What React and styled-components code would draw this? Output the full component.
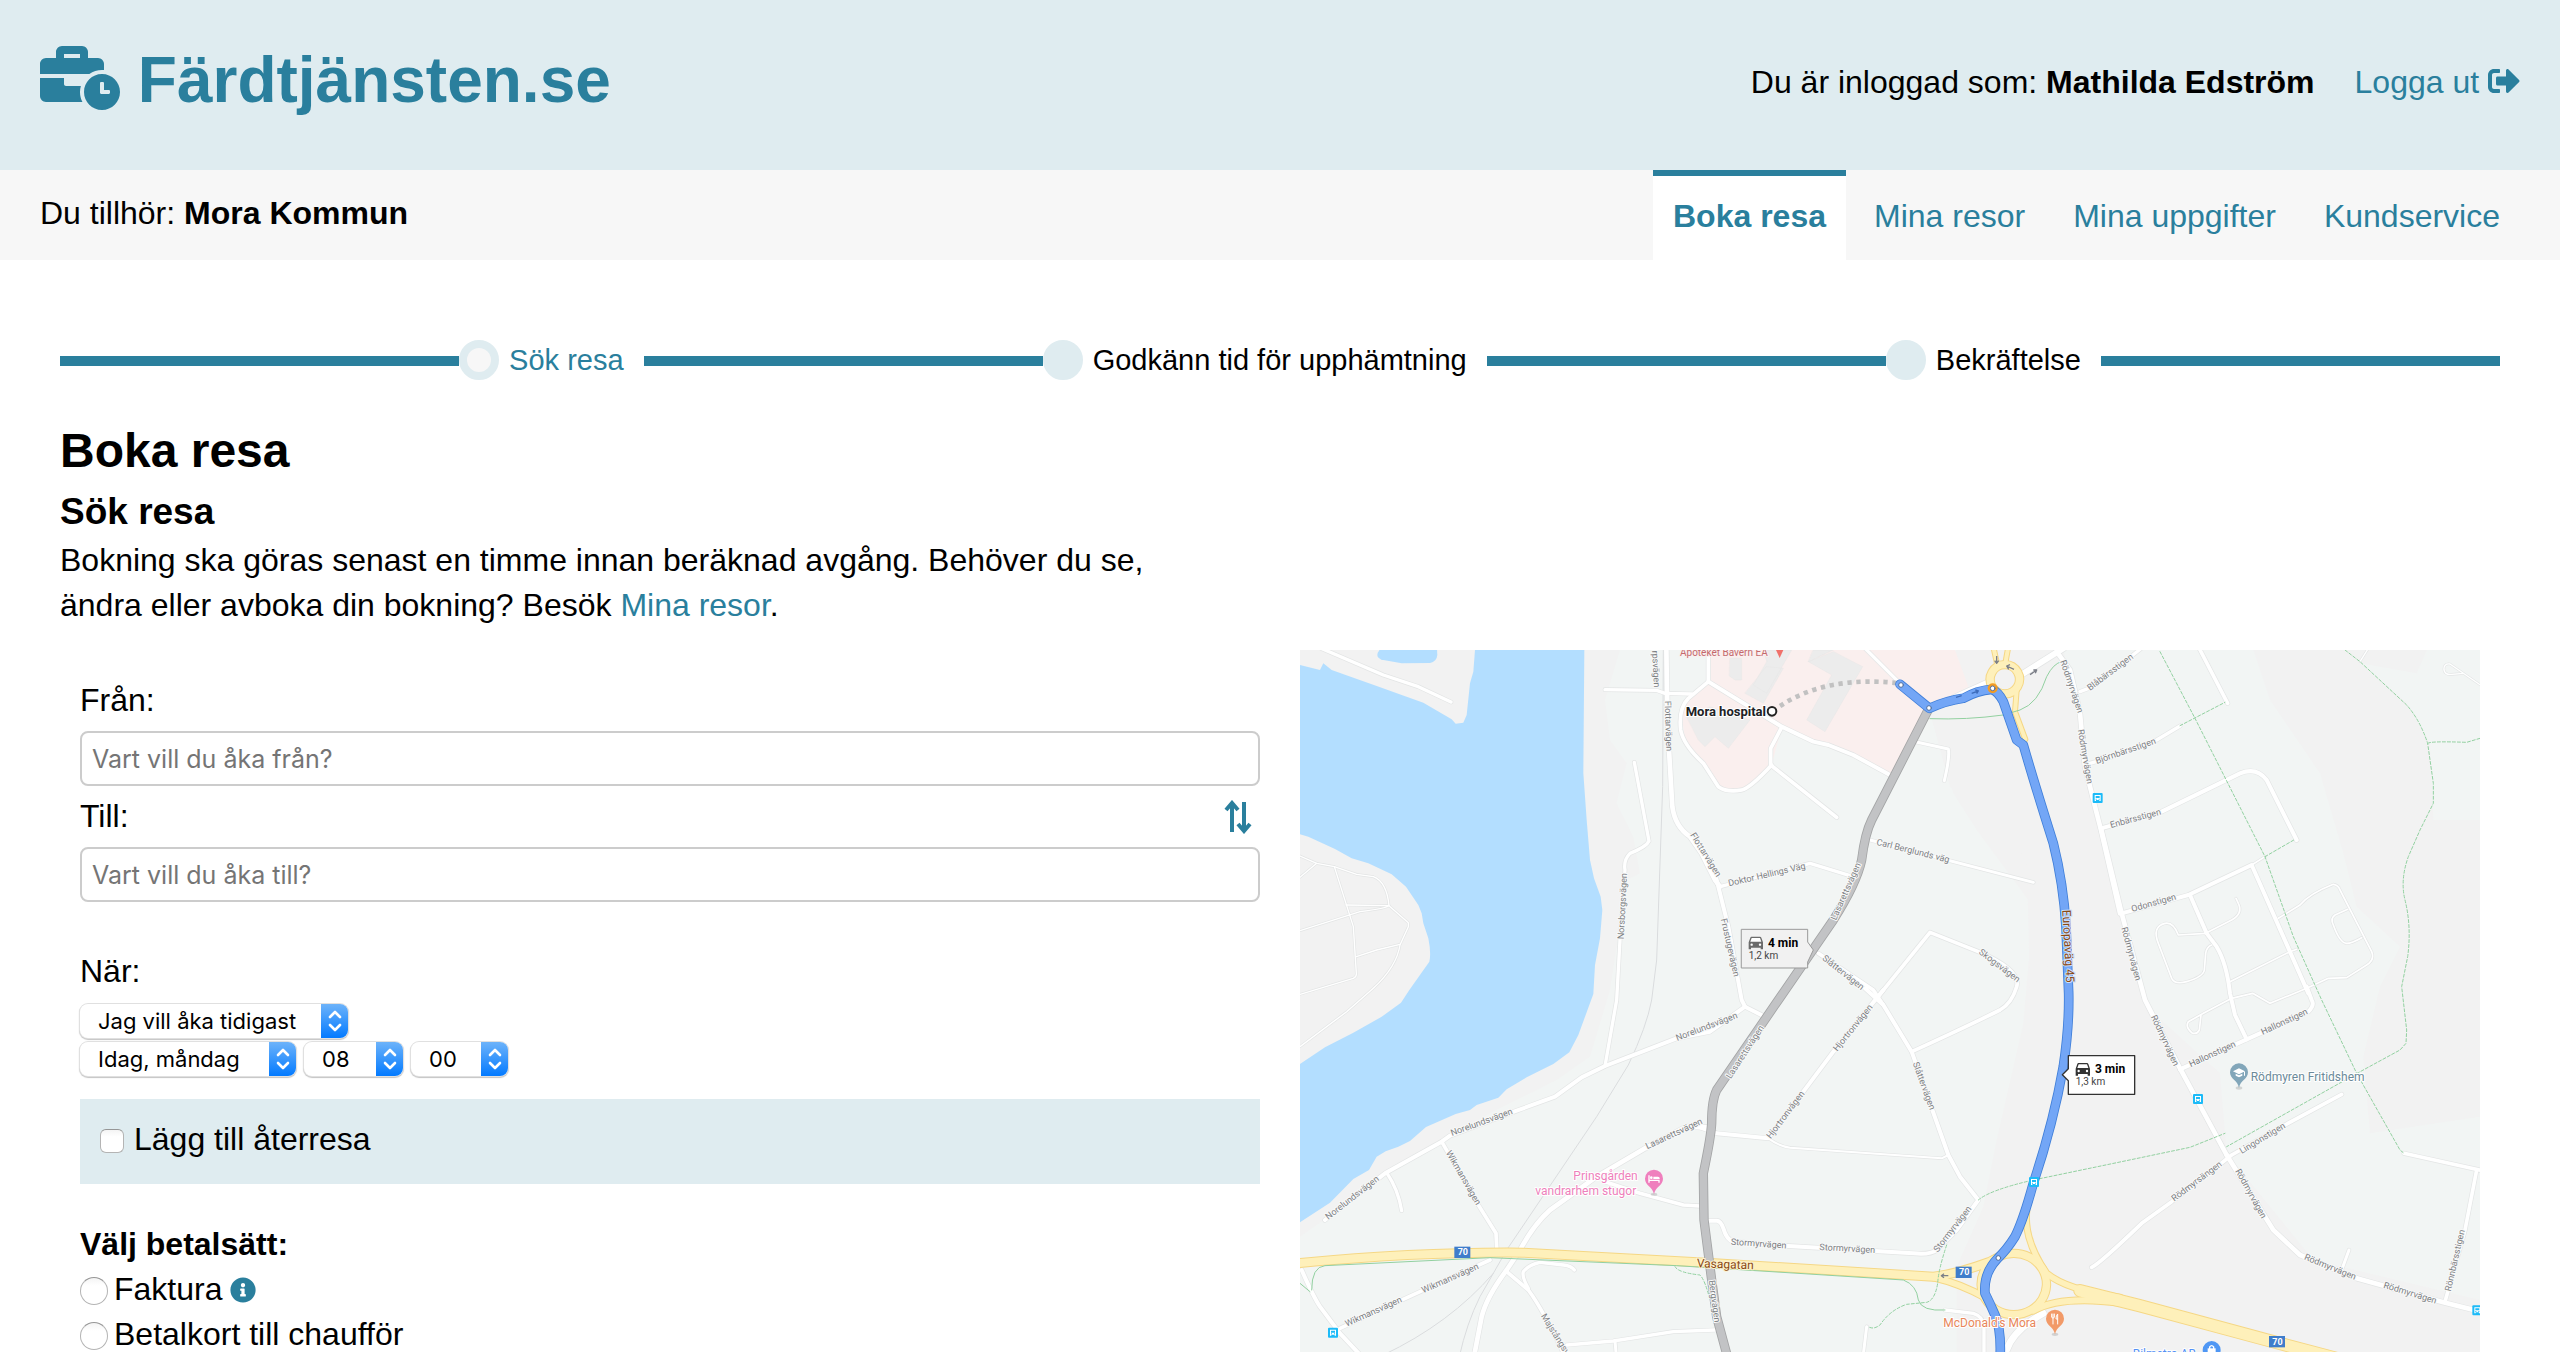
import React from "react";
import styled, { createGlobalStyle } from "styled-components";
import { FaBusinessTime, FaSignOutAlt, FaInfoCircle } from "react-icons/fa";

const teal = "#2a7f9d";
const pale = "#dfecf0";
const light = "#f7f7f7";

const Global = createGlobalStyle`
  *, *::before, *::after { box-sizing: border-box; }
  html { scrollbar-width: none; }
  body {
    margin: 0;
    background: #fff;
    color: #000;
    font-family: "Liberation Sans", Arial, Helvetica, sans-serif;
    font-size: 32px;
    line-height: 45px;
  }
`;

const Header = styled.header`
  display: flex;
  justify-content: space-between;
  align-items: flex-start;
  padding: 38px 40px 48px;
  background: ${pale};
`;
const Logo = styled.a`
  color: ${teal};
  font-size: 64px;
  font-weight: bold;
  line-height: 84px;
  text-decoration: none;
  svg { width: 80px; height: 64px; vertical-align: -8px; }
`;
const User = styled.div`
  display: flex;
  gap: 40px;
  padding-top: 22px;
`;
const Link = styled.a`
  color: ${teal};
  text-decoration: none;
  svg { vertical-align: -4px; }
`;
const SubHeader = styled.div`
  display: flex;
  justify-content: space-between;
  align-items: flex-start;
  padding: 0 40px;
  background: ${light};
`;
const Belongs = styled.div`
  padding-top: 21px;
`;
const Nav = styled.nav`
  display: flex;
  gap: 8px;
`;
const Tab = styled.a`
  padding: 18px 20px 21px;
  border-top: 6px solid ${(p) => (p.$active ? teal : "transparent")};
  background: ${(p) => (p.$active ? "#fff" : "transparent")};
  color: ${teal};
  font-weight: ${(p) => (p.$active ? "bold" : "normal")};
  text-decoration: none;
`;

const Main = styled.main`
  padding: 80px 60px 0;
`;
const Steps = styled.ol`
  display: flex;
  align-items: center;
  margin: 0 0 37px;
  padding: 0;
  list-style: none;
  font-size: 29px;
  line-height: 40px;
  &::after { content: ""; flex: 1; height: 10px; margin-top: 2px; background: ${teal}; }
`;
const Step = styled.li`
  display: flex;
  flex: 1 0 auto;
  align-items: center;
  padding-right: 20px;
  color: ${(p) => (p.$current ? teal : "inherit")};
  &::before { content: ""; flex: 1; height: 10px; margin-top: 2px; background: ${teal}; }
`;
const Dot = styled.span`
  width: 40px;
  height: 40px;
  margin-right: 10px;
  border: 8px solid ${pale};
  border-radius: 50%;
  background: ${(p) => (p.$current ? light : pale)};
`;
const Title = styled.h1`
  margin: 0;
  font-size: 48px;
  line-height: 68px;
`;
const Subtitle = styled.h2`
  margin: 0;
  font-size: 37px;
  line-height: 53px;
`;
const Intro = styled.p`
  max-width: 1120px;
  margin: 0 0 22px;
`;
const Columns = styled.div`
  display: grid;
  grid-template-columns: 1fr 1fr;
`;
const Form = styled.form`
  padding: 20px 20px 28px;
`;
const FieldHead = styled.div`
  display: flex;
  justify-content: space-between;
  align-items: center;
  margin: 8px 0;
  padding-right: 8px;
`;
const TextBox = styled.input`
  display: block;
  width: 100%;
  height: 55px;
  padding: 0 10px;
  border: 2px solid #ccc;
  border-radius: 8px;
  background: #fff;
  font: 25px Inter, sans-serif;
  &::placeholder { color: #757575; opacity: 1; }
`;
const SwapButton = styled.button`
  display: flex;
  padding: 0;
  border: 0;
  background: none;
  color: ${teal};
`;
const WhenSet = styled.fieldset`
  margin: 47px 0 19px;
  padding: 0;
  border: 0;
`;
const WhenLegend = styled.legend`
  padding: 0 0 10px;
`;
const SelectRow = styled.div`
  display: flex;
  gap: 8px;
  margin-bottom: 4px;
`;
const SelectWrap = styled.span`
  display: grid;
  grid-template-columns: 1fr 27px;
  width: ${(p) => p.$width}px;
  height: 34px;
  border-radius: 8px;
  overflow: hidden;
  background: #fff;
  box-shadow: 0 0 0 1px #e0e0e0, 0 1px 1px 1px #c4c4c4;
`;
const Select = styled.select`
  grid-area: 1 / 1 / 2 / 3;
  appearance: none;
  padding: 0 18px;
  border: 0;
  background: transparent;
  color: #000;
  font: 22px Inter, sans-serif;
`;
const Stepper = styled.span`
  grid-area: 1 / 2 / 2 / 3;
  display: grid;
  place-items: center;
  background: linear-gradient(#6db3fa, #037aff);
  pointer-events: none;
`;
const ReturnBox = styled.div`
  display: flex;
  padding: 18px 20px 22px;
  background: ${pale};
`;
const Option = styled.label`
  display: flex;
  align-items: center;
  gap: ${(p) => p.$gap}px;
`;
const Check = styled.input`
  appearance: none;
  width: 24px;
  height: 24px;
  margin: 2px 0 0;
  border: 1px solid #b4b4b4;
  border-top-color: #969696;
  border-radius: 6px;
  background: linear-gradient(#f4f4f4, #fff 30%);
`;
const Radio = styled(Check)`
  width: 28px;
  height: 28px;
  border-radius: 50%;
`;
const PaySet = styled.fieldset`
  margin: 38px 0 0;
  padding: 0;
  border: 0;
`;
const PayLegend = styled.legend`
  padding: 0;
  font-weight: bold;
`;
const PayRow = styled.div`
  display: flex;
  align-items: center;
  gap: 8px;
  color: ${teal};
  ${Option} { color: #000; }
`;
const MapPane = styled.div`
  padding: 0 20px;
`;
const MapSvg = styled.svg`
  display: block;
  width: 100%;
  height: auto;
  background: #f2f2f2;
  font-family: Roboto, sans-serif;
`;
const MapText = styled.text`
  font-size: ${(p) => p.$size}px;
  font-weight: ${(p) => p.$weight};
  fill: ${(p) => p.$color};
  paint-order: stroke;
  stroke: ${(p) => p.$halo};
  stroke-width: 2px;
  stroke-linejoin: round;
`;

/* The map is drawn in six tiles, at three drawing units to the pixel. */
const tiles = { A: [-30, -30], B: [1200, -30], C: [2340, -30], D: [-30, 1020], E: [1200, 1020], F: [2340, 1020] };
const shift = (t) => `translate(${tiles[t][0]} ${tiles[t][1]})`;

const roads = [
  ["A", 10, "M70,15 L280,105 385,140 483,186"],
  ["A", 10, "M945,149 L1100,151 1125,160 1205,162"],
  ["A", 14, "M1129,20 L1131,160 1137,330 1147,500 Q1155,560 1200,590 L1235,640 1275,720 1290,740"],
  ["A", 10, "M1033,367 L1077,603 Q1070,620 1020,640 Q1000,660 1005,690 L990,900 980,1080 945,1278"],
  ["B", 11, "M25,20 L25,125 -35,175 Q-65,205 -58,270 Q-50,315 10,370 L55,440 Q80,458 125,450 Q150,445 215,375"],
  ["B", 12, "M25,125 L245,260 340,305 385,315 460,345 570,405"],
  ["B", 11, "M245,262 L212,325 212,375 410,532"],
  ["B", 10, "M490,20 L600,130"],
  ["B", 9, "M645,305 L745,327 Q750,350 733,422"],
  ["B", 9, "M510,600 L1000,727"],
  ["B", 10, "M60,740 L330,670 460,710"],
  ["B", 12, "M45,700 L85,860 125,1080 135,1100 190,1128"],
  ["B", 13, "M760,172 L870,122"],
  ["B", 18, "M955,110 L1090,25"],
  ["B", 14, "M1070,35 L1110,90 1140,220 1155,380 1185,500 1203,570 1260,820"],
  ["B", 11, "M355,940 L520,1050 550,1095"],
  ["B", 11, "M530,1075 L690,877 835,935 Q965,990 950,1040 Q935,1090 900,1110 Q800,1160 635,1235"],
  ["E", 12, "M495,-5 L550,45 635,185 745,495 780,560 835,630 770,720 710,780 Q690,795 640,790 L265,768 100,755 Q80,750 70,715 Q62,692 50,692 L25,692"],
  ["E", 12, "M550,0 L400,185 310,305 205,445 50,430 0,412"],
  ["E", 6, "M205,445 Q240,470 270,473 L725,505 745,495"],
  ["D", 12, "M1365,50 L1260,125 1160,145 945,228 875,262 795,320 680,362 480,437 455,455 285,550 105,690"],
  ["D", 10, "M290,548 Q325,600 335,662"],
  ["D", 11, "M455,455 L565,645 618,730 621,790"],
  ["D", 14, "M1250,412 L1190,410 1065,475 920,560 780,660 Q730,705 690,780 L650,840 Q590,920 575,980 L550,1110"],
  ["D", 11, "M945,575 L1050,610 1180,645 1230,648"],
  ["D", 11, "M600,810 L390,905 150,1015"],
  ["D", 12, "M35,840 Q70,920 90,950 L150,1030 225,1110"],
  ["D", 11, "M650,845 L715,900 Q760,960 830,1110"],
  ["D", 10, "M715,895 Q695,860 700,845 Q715,825 750,817 L820,825 Q845,828 853,840"],
  ["D", 10, "M830,1065 L970,1053 1150,1025 1275,1020"],
  ["D", 9, "M975,1053 L980,1110"],
  ["E", 9, "M500,1010 L488,1110"],
  ["E", 10, "M735,960 L820,970 Q850,980 852,1010 L852,1110"],
  ["E", 20, "M920,1080 Q940,1020 1030,970"],
  ["F", 11, "M35,832 Q60,820 185,700 L275,635 430,515 455,495 615,405 785,313"],
  ["C", 14, "M63,565 L125,820 195,1080 300,1285 440,1545"],
  ["F", 14, "M440,495 L580,720 660,795 830,865 1090,937 1230,972"],
  ["F", 12, "M300,238 L500,148 685,65 Q705,45 695,30 L680,-10"],
  ["C", 12, "M330,765 L380,880 410,920 Q440,970 450,1060 L465,1125 500,1198"],
  ["C", 12, "M125,820 L325,765 515,675 685,1060"],
  ["C", 10, "M30,370 L100,350 230,300 300,258"],
  ["C", 12, "M63,565 L245,515 480,400 Q530,380 560,420 L650,600"],
  ["C", 11, "M355,20 L443,190"],
  ["C", 10, "M0,155 L40,140 190,20"],
  ["C", 5, "M515,675 L555,650"],
  ["F", 11, "M972,490 L1230,547"],
  ["F", 11, "M1190,540 L1155,720 1095,935"],
  ["F", 9, "M785,840 L807,780"],
  ["C", 5, "M380,880 L295,885 Q280,845 255,850 Q215,860 235,910 L275,1015 Q285,1035 320,1025 Q370,1010 373,990 L377,940 Q380,920 395,915"],
  ["C", 5, "M380,878 L455,840 Q490,820 475,790 L468,775"],
  ["C", 5, "M595,835 L660,795 Q690,760 760,733 Q775,735 780,750 L875,935 Q885,960 860,975 L800,1013 745,1015 680,1045 570,1090 518,1060 455,1075 370,1120 325,1145 Q315,1160 335,1178 Q350,1185 358,1170 L363,1125"],
  ["C", 5, "M803,808 L765,825 Q750,835 760,855 Q780,910 800,910 Q815,910 845,893"],
  ["C", 5, "M450,1025 L630,935 650,928"],
  ["C", 4, "M865,25 L840,65"],
  ["C", 4, "M1230,155 L1110,72 Q1090,70 1092,90 Q1095,105 1115,103 L1150,100"],
  ["A", 4, "M30,648 L80,670 133,680 200,703 250,710 Q290,725 297,797 L355,848 355,860 330,915 Q320,980 250,1045 L170,1115 30,1220"],
  ["A", 4, "M80,670 L30,712"],
  ["A", 4, "M133,680 L190,860 199,1000 Q200,1010 190,1015 L30,1063"],
  ["A", 4, "M168,795 L297,797 Q290,805 210,815 L30,872"],
  ["A", 4, "M199,950 L260,930 330,913"],
];

const highways = [
  ["D", 26, "M0,822 Q380,785 700,788 L1250,818 1930,860 Q2000,852 2100,815 L2120,805"],
  ["E", 20, "M700,862 Q780,880 860,925"],
  ["E", 24, "M942,790 A98,92 0 1 1 941,790 Z"],
  ["E", 18, "M980,660 Q970,750 1040,850 Q1100,900 1260,922"],
  ["E", 20, "M1000,962 Q1080,915 1260,938"],
  ["F", 36, "M0,902 L180,947 580,1055 780,1108"],
  ["F", 16, "M80,925 Q140,935 220,962"],
  ["B", 24, "M915,74 A44,44 0 1 1 914,74 Z"],
  ["B", 14, "M880,20 L893,80"],
  ["B", 14, "M925,20 L915,75"],
  ["B", 14, "M950,150 L945,215 976,298"],
];

const rails = [
  ["A", "M1120,30 L1118,440 1100,960 1085,1080 Q1070,1160 1015,1275 L920,1430 650,1830 570,1970 Q530,2050 508,2150"],
  ["D", "M610,850 Q480,1000 280,1095"],
];

const trails = [
  ["B", 0, "M690,236 Q800,240 910,225 L960,210 Q1015,190 1040,110 Q1060,70 1085,65"],
  ["D", 0, "M65,900 Q65,830 105,827 L600,803 1160,827 1840,870 Q1880,885 1885,930 Q1895,965 1965,960"],
  ["D", 0, "M30,880 L60,905"],
  ["D", 1, "M1155,830 Q1165,848 1230,855 Q1245,870 1260,930"],
  ["C", 1, "M240,35 L345,235 555,650 640,890 725,1080 830,1300 960,1530 972,1540"],
  ["C", 1, "M300,257 L435,187"],
  ["C", 1, "M555,650 L645,598"],
  ["C", 1, "M795,30 L840,65 980,195 Q1020,240 1043,310 L1060,430 1060,490 1020,570 985,650 Q960,720 975,780 Q995,860 983,950 L965,1040 980,1170 978,1210 960,1230 835,1298 440,1520"],
  ["C", 1, "M1043,310 Q1050,303 1160,307 L1200,295"],
  ["E", 1, "M835,630 Q870,600 1000,570 L1260,516 1470,472 1575,430"],
  ["E", 1, "M740,765 Q715,840 713,880 Q705,930 680,937 L620,943 Q570,960 540,1005 Q520,1020 505,1010"],
];

const routeAlt = "M687,205 L515,540 Q495,580 485,660 Q470,730 400,840 L235,1080 50,1350 Q35,1380 35,1450 Q33,1490 10,1600 L12,1740 35,1920 50,2030 85,2160";
const routeMain = "M600,133 L688,205 Q740,182 790,175 Q830,152 875,148 Q895,155 910,185 L950,300 970,315 Q1000,420 1060,610 Q1090,730 1098,860 L1106,1060 Q1108,1160 1090,1280 Q1060,1450 1000,1630 Q970,1740 945,1790 Q920,1830 893,1855 Q850,1900 855,1960 Q870,1990 885,2025 Q905,2070 900,2160";

/* tile, x, y, angle, text */
const streets = [
  ["A", 1086, 32, 87, "rpsvägen"],
  ["A", 1124, 183, 88, "Flottarvägen"],
  ["A", 1200, 585, 58, "Flottarvägen"],
  ["A", 1001, 898, -87, "Norsborgsvägen"],
  ["B", 87, 739, -13, "Doktor Hellings Väg"],
  ["B", 528, 614, 14, "Carl Berglunds väg"],
  ["B", 62, 838, 77, "Frustugevägen"],
  ["B", 365, 958, 38, "Slåttervägen"],
  ["B", 835, 940, 37, "Skogsvägen"],
  ["B", 408, 842, -66, "Lasarettsvägen"],
  ["B", 1080, 64, 71, "Rödmyrvägen"],
  ["B", 1133, 270, 80, "Rödmyrvägen"],
  ["C", 30, 153, -37, "Blåbärsstigen"],
  ["C", 50, 372, -19, "Björnbärsstigen"],
  ["C", 93, 564, -15, "Enbärsstigen"],
  ["C", 157, 816, -16, "Odonstigen"],
  ["C", 124, 864, 75, "Rödmyrvägen"],
  ["F", 212, 80, 65, "Rödmyrvägen"],
  ["F", 332, 232, -25, "Hallonstigen"],
  ["F", 548, 135, -25, "Hallonstigen"],
  ["F", 485, 492, -31, "Lingonstigen"],
  ["F", 283, 635, -37, "Rödmyrsängen"],
  ["F", 465, 543, 61, "Rödmyrvägen"],
  ["F", 671, 808, 22, "Rödmyrvägen"],
  ["F", 909, 893, 17, "Rödmyrvägen"],
  ["F", 1112, 905, -77, "Rönnbärsstigen"],
  ["D", 1162, 153, -21, "Norelundsvägen"],
  ["D", 486, 438, -20, "Norelundsvägen"],
  ["D", 115, 690, -38, "Norelundsvägen"],
  ["D", 467, 488, 60, "Wikmansvägen"],
  ["D", 400, 910, -24, "Wikmansvägen"],
  ["D", 170, 1010, -24, "Wikmansvägen"],
  ["D", 1072, 478, -25, "Lasarettsvägen"],
  ["D", 752, 978, 58, "Majstångsvägen"],
  ["E", 92, 268, -57, "Lasarettsvägen"],
  ["E", 412, 185, -51, "Hjortronvägen"],
  ["E", 212, 448, -53, "Hjortronvägen"],
  ["E", 638, 220, 70, "Slåttervägen"],
  ["E", 92, 764, 4, "Stormyrvägen"],
  ["E", 358, 780, 3, "Stormyrvägen"],
  ["E", 713, 788, -52, "Stormyrvägen"],
  ["E", 26, 872, 82, "Bergvägen"],
];

const places = [
  ["A", 1170, 47, 0, "Apoteket Bavern EA", 10, 400, "#c4696d", "#faf0ef"],
  ["A", 1187, 227, 0, "Mora hospital", 13, 700, "#202124", "#fff"],
  ["D", 850, 571, 0, "Prinsgården", 12, 400, "#ee7fbb", "#fff"],
  ["D", 736, 615, 0, "vandrarhem stugor", 12, 400, "#ee7fbb", "#fff"],
  ["D", 1220, 832, 2, "Vasagatan", 12, 400, "#8a4a14", "#fdf3cf"],
  ["B", 1087, 810, 87, "Europaväg 45", 12, 400, "#8a4a14", "#cfe0fb"],
  ["E", 730, 1010, 0, "McDonald's Mora", 12, 400, "#e8865a", "#fff"],
  ["F", 512, 272, 0, "Rödmyren Fritidshem", 12, 400, "#6b8a99", "#fff"],
  ["F", 158, 1104, 0, "Bilmetro AB", 12, 400, "#5491f5", "#fff"],
];

const stops = [["C", 53, 474], ["F", 354, 327], ["F", 1192, 961], ["E", 1002, 576], ["D", 129, 1028]];
const shields = [["D", 517, 787], ["E", 791, 847], ["F", 591, 1055]];

function Label({ tile, x, y, angle, size = 9, weight = 400, color = "#7d8083", halo = "#f8f9f9", children }) {
  const px = (tiles[tile][0] + x) / 3;
  const py = (tiles[tile][1] + y) / 3;
  return (
    <MapText $size={size} $weight={weight} $color={color} $halo={halo} transform={`translate(${px} ${py}) rotate(${angle})`}>
      {children}
    </MapText>
  );
}

function Pin({ tile, x, y, color, children }) {
  return (
    <g transform={`translate(${tiles[tile][0] + x} ${tiles[tile][1] + y})`}>
      <ellipse cx="0" cy="46" rx="10" ry="5" fill="#0002" />
      <path d="M0,46 C-4,22 -27,20 -27,-1 A27,27 0 1 1 27,-1 C27,20 4,22 0,46Z" fill={color} />
      {children}
    </g>
  );
}

function Car({ color }) {
  return (
    <g fill={color}>
      <path d="M8,0 H34 Q37,0 38,3 L43,17 V38 H36 V33 H7 V38 H0 V17 L5,3 Q6,0 8,0Z" />
      <path d="M9,4 H34 L38,15 H5Z" fill="#fff" />
      <circle cx="9" cy="24" r="3.5" fill="#fff" />
      <circle cx="34" cy="24" r="3.5" fill="#fff" />
    </g>
  );
}

function RouteMap() {
  return (
    <MapSvg viewBox="0 0 1180 710" role="img" aria-label="Karta över Mora">
      <g transform="scale(0.333333)" fill="none" strokeLinecap="round" strokeLinejoin="round">
        <g transform={shift("A")}>
          <path fill="#f2f5f4" d="M990,30 L945,180 960,300 1010,370 980,490 1030,590 1050,700 1010,720 960,1050 900,1250 800,1320 600,1420 300,1600 30,1790 V2160 H2000 L2000,1880 2080,1700 2120,1500 2200,1150 2230,800 2060,570 1990,460 1900,150 2000,30Z" />
          <path fill="#b3deff" d="M30,75 L90,90 100,70 125,90 260,138 400,188 485,238 497,251 520,248 530,225 540,130 550,95 555,30 883,30 880,400 890,540 900,660 912,715 932,770 937,810 930,895 915,975 910,1062 865,1185 838,1237 790,1272 710,1312 650,1348 625,1373 560,1395 540,1410 497,1422 408,1461 360,1503 325,1520 287,1534 260,1550 237,1590 190,1617 120,1688 30,1747 V1272 L105,1222 190,1178 275,1130 333,1088 358,1050 418,965 Q424,940 415,895 L400,850 395,820 385,795 348,740 305,703 235,670 185,655 135,627 55,590 30,583Z" />
          <path fill="#b3deff" d="M270,28 Q250,52 280,60 L335,70 420,69 Q440,65 442,45 L441,28Z" />
        </g>
        <g transform={shift("B")}>
          <path fill="#faefee" d="M25,30 H765 L805,140 690,205 570,405 460,345 340,305 245,262 215,375 140,445 90,455 50,435 10,370 -45,300 -58,200 25,125Z" />
          <path fill="#f2f2f2" d="M690,215 L830,190 920,220 1060,640 1100,900 990,1050 980,650 880,580 750,440Z" />
          <path fill="#ececec" stroke="#e3e3e3" d="M90,55 H125 V120 H105 L88,108Z M190,30 H275 L200,160 160,135 200,65Z M340,30 H400 L325,65Z M430,50 L488,80 375,275 320,240 395,105 325,65 400,35Z M-40,230 L30,200 150,240 85,325 45,290 15,320 -5,300Z M200,80 L250,85 190,190 135,160Z" />
        </g>
        <g transform={shift("C")}>
          <path fill="#f2f5f4" d="M-50,30 H520 L570,180 720,400 790,640 830,800 960,920 900,1040 850,1250 870,1480 1200,1430 V1980 L700,1860 440,1540 420,1300 200,1100 130,850Z" />
          <path fill="#f2f5f4" d="M840,70 L1010,100 1040,30 H1200 V540 H1060 L1050,310 980,190Z" />
        </g>
        {rails.map(([t, d]) => <path key={d} transform={shift(t)} d={d} stroke="#dadcde" strokeWidth="3" />)}
        {roads.map(([t, w, d]) => <path key={d} transform={shift(t)} d={d} stroke="#e3e5e5" strokeWidth={w + 4} />)}
        {roads.map(([t, w, d]) => <path key={d} transform={shift(t)} d={d} stroke="#fff" strokeWidth={w} />)}
        {highways.map(([t, w, d]) => <path key={d} transform={shift(t)} d={d} stroke="#f5d785" strokeWidth={w + 4} />)}
        {highways.map(([t, w, d]) => <path key={d} transform={shift(t)} d={d} stroke="#fef0ba" strokeWidth={w - 2} />)}
        {trails.map(([t, dash, d]) => (
          <path key={d} transform={shift(t)} d={d} stroke="#92d0a0" strokeWidth="3" strokeDasharray={dash ? "9 6" : "none"} />
        ))}
        <g transform={shift("B")}>
          <path d={routeAlt} stroke="#a3a4a5" strokeWidth="28" strokeLinecap="butt" />
          <path d={routeAlt} stroke="#c2c3c5" strokeWidth="23" strokeLinecap="butt" />
          <path d="M240,198 Q380,105 600,130" stroke="#c1c1c1" strokeWidth="14" strokeDasharray="13 14" strokeLinecap="butt" />
          <path d={routeMain} stroke="#3f7ed8" strokeWidth="29" />
          <path d={routeMain} stroke="#73a6f6" strokeWidth="24" />
          <circle cx="878" cy="145" r="15" fill="#f29b24" />
          {[[603, 135], [687, 204], [878, 145], [895, 1854]].map(([x, y]) => (
            <circle key={x} cx={x} cy={y} r="7" fill="#fff" stroke="#52709f" strokeWidth="3" />
          ))}
          <circle cx="216" cy="214" r="13" fill="#fff" stroke="#222" strokeWidth="6" />
          <path d="M228,30 H250 L239,54Z" fill="#f0716b" />
          <g stroke="#7c7f88" strokeWidth="4" strokeLinecap="butt">
            <path d="M890,48 V70 M884,62 L890,70 896,62 M942,88 L920,78 M930,74 L920,78 926,88 M990,104 L1010,90 M1000,90 H1010 L1006,100" />
            <path stroke="#3d6cbb" d="M815,160 L835,153 M826,150 L835,153 830,161 M768,172 L785,167" />
            <path d="M745,1907 H724 M732,1901 L724,1907 732,1913" />
          </g>
        </g>
        <g transform={shift("B")}>
          <path d="M125,868 H323 V906 L340,930 323,966 V984 H125Z" fill="#f1f1f1" stroke="#9a9a9a" strokeWidth="3" />
          <g transform="translate(146 890)"><Car color="#6b6b6b" /></g>
        </g>
        <g transform={shift("E")}>
          <path d="M1105,197 H1304 V313 H1105 V272 L1087,254 1105,236Z" fill="#fff" stroke="#333" strokeWidth="4" />
          <g transform="translate(1127 219)"><Car color="#333" /></g>
        </g>
        {stops.map(([t, x, y]) => (
          <g key={x} transform={`translate(${tiles[t][0] + x} ${tiles[t][1] + y})`}>
            <rect x="-15" y="-15" width="30" height="30" rx="3" fill="#1dbbf8" />
            <path fill="#fff" d="M-9,-9 H9 V9 H5 V6 H-5 V9 H-9Z" />
            <path fill="#1dbbf8" d="M-6,-6 H6 V0 H-6Z M-6,2 H-3 V5 H-6Z M3,2 H6 V5 H3Z" />
          </g>
        ))}
        {shields.map(([t, x, y]) => (
          <rect key={x} x={tiles[t][0] + x - 24} y={tiles[t][1] + y - 17} width="48" height="34" fill="#3f7dcb" />
        ))}
        <Pin tile="D" x={1092} y={567} color="#ef7fbd">
          <path fill="#fff" d="M-17,-11 H-13 V2 H17 V11 H13 V6 H-13 V11 H-17Z M-2,-7 H12 Q17,-7 17,-2 V0 H-2Z" />
          <circle cx="-8" cy="-4" r="4" fill="#fff" />
        </Pin>
        <Pin tile="E" x={1065} y={987} color="#f29a68">
          <path stroke="#fff" strokeWidth="3" d="M-10,-15 V-5 Q-6,0 -2,-5 V-15 M-6,-15 V15 M8,15 V-15 Q3,-10 3,0 H8" />
        </Pin>
        <Pin tile="F" x={477} y={248} color="#82a6b9">
          <path fill="#fff" d="M0,-13 L18,-4 0,5 -18,-4Z M-10,3 L0,8 10,3 V9 L0,14 -10,9Z M15,-3 H18 V9 H15Z" />
        </Pin>
        <Pin tile="F" x={395} y={1081} color="#4f97f4">
          <path stroke="#fff" strokeWidth="4" d="M-6,-4 V-10 Q0,-18 6,-10 V-4" />
          <path fill="#fff" d="M-12,-6 H12 V14 H-12Z" />
        </Pin>
      </g>
      {streets.map(([t, x, y, a, name]) => <Label key={t + x} tile={t} x={x} y={y} angle={a}>{name}</Label>)}
      {places.map(([t, x, y, a, name, s, w, c, h]) => (
        <Label key={name} tile={t} x={x} y={y} angle={a} size={s} weight={w} color={c} halo={h}>{name}</Label>
      ))}
      {shields.map(([t, x, y]) => (
        <Label key={x} tile={t} x={x - 14} y={y + 9} angle={0} weight={700} color="#fff" halo="none">70</Label>
      ))}
      <Label tile="B" x={204} y={920} angle={0} size={12} weight={700} color="#000" halo="none">4 min</Label>
      <Label tile="B" x={146} y={956} angle={0} size={10} color="#444" halo="none">1,2 km</Label>
      <Label tile="E" x={1185} y={250} angle={0} size={12} weight={700} color="#000" halo="none">3 min</Label>
      <Label tile="E" x={1127} y={286} angle={0} size={10} color="#444" halo="none">1,3 km</Label>
    </MapSvg>
  );
}

function DropDown({ label, width, value }) {
  return (
    <SelectWrap $width={width}>
      <Select aria-label={label} defaultValue={value}>
        <option>{value}</option>
      </Select>
      <Stepper>
        <svg width="14" height="22" viewBox="0 0 14 22" fill="none" stroke="#fff" strokeWidth="2.6" strokeLinecap="round" strokeLinejoin="round">
          <path d="M2 7 L7 2 L12 7 M2 15 L7 20 L12 15" />
        </svg>
      </Stepper>
    </SelectWrap>
  );
}

export default function App() {
  return (
    <>
      <Global />
      <Header>
        <Logo href="#"><FaBusinessTime /> Färdtjänsten.se</Logo>
        <User>
          <span>Du är inloggad som: <b>Mathilda Edström</b></span>
          <Link href="#">Logga ut <FaSignOutAlt size={32} /></Link>
        </User>
      </Header>
      <SubHeader>
        <Belongs>Du tillhör: <b>Mora Kommun</b></Belongs>
        <Nav>
          <Tab href="#" $active>Boka resa</Tab>
          <Tab href="#">Mina resor</Tab>
          <Tab href="#">Mina uppgifter</Tab>
          <Tab href="#">Kundservice</Tab>
        </Nav>
      </SubHeader>
      <Main>
        <Steps>
          <Step $current><Dot $current />Sök resa</Step>
          <Step><Dot />Godkänn tid för upphämtning</Step>
          <Step><Dot />Bekräftelse</Step>
        </Steps>
        <Title>Boka resa</Title>
        <Subtitle>Sök resa</Subtitle>
        <Intro>
          Bokning ska göras senast en timme innan beräknad avgång. Behöver du se, ändra eller avboka din bokning? Besök{" "}
          <Link href="#">Mina resor</Link>.
        </Intro>
        <Columns>
          <Form>
            <FieldHead><label htmlFor="from">Från:</label></FieldHead>
            <TextBox id="from" placeholder="Vart vill du åka från?" />
            <FieldHead>
              <label htmlFor="to">Till:</label>
              <SwapButton type="button" aria-label="Byt plats">
                <svg width="28" height="34" viewBox="0 0 28 34" fill="none" stroke="currentColor" strokeWidth="4">
                  <path d="M8 32 V4 M2 10 L8 3 L14 10 M20 2 V30 M14 24 L20 31 L26 24" />
                </svg>
              </SwapButton>
            </FieldHead>
            <TextBox id="to" placeholder="Vart vill du åka till?" />
            <WhenSet>
              <WhenLegend>När:</WhenLegend>
              <SelectRow><DropDown label="Typ av tid" width={268} value="Jag vill åka tidigast" /></SelectRow>
              <SelectRow>
                <DropDown label="Dag" width={216} value="Idag, måndag" />
                <DropDown label="Timme" width={99} value="08" />
                <DropDown label="Minut" width={97} value="00" />
              </SelectRow>
            </WhenSet>
            <ReturnBox>
              <Option $gap={10}><Check type="checkbox" />Lägg till återresa</Option>
            </ReturnBox>
            <PaySet>
              <PayLegend>Välj betalsätt:</PayLegend>
              <PayRow>
                <Option $gap={6}><Radio type="radio" name="pay" />Faktura</Option>
                <FaInfoCircle size={26} />
              </PayRow>
              <PayRow>
                <Option $gap={6}><Radio type="radio" name="pay" />Betalkort till chaufför</Option>
              </PayRow>
            </PaySet>
          </Form>
          <MapPane><RouteMap /></MapPane>
        </Columns>
      </Main>
    </>
  );
}
